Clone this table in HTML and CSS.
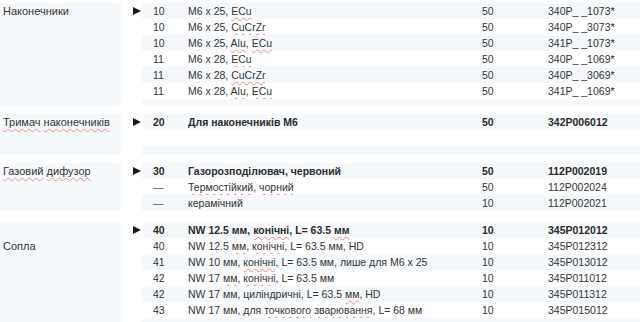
FILE: index.html
```html
<!DOCTYPE html>
<html lang="uk">
<head>
<meta charset="utf-8">
<title>Каталог</title>
<link rel="stylesheet" href="styles.css">
</head>
<body>
<div class="catalog">

  <section class="group g1">
    <div class="label">Наконечники</div>
    <div class="rows">
      <div class="row"><span class="mark"><svg viewBox="0 0 8 8" width="8" height="8"><polygon points="0,0 8,4 0,8"/></svg></span><div class="cells"><span class="num">10</span><span class="desc">M6 x 25, <span class="sp">ECu</span></span><span class="qty">50</span><span class="art">340P_ _1073*</span></div></div>
      <div class="row"><span class="mark"></span><div class="cells"><span class="num">10</span><span class="desc">M6 x 25, <span class="sp">CuCrZr</span></span><span class="qty">50</span><span class="art">340P_ _3073*</span></div></div>
      <div class="row"><span class="mark"></span><div class="cells"><span class="num">10</span><span class="desc">M6 x 25, <span class="sp">Alu</span>, <span class="sp">ECu</span></span><span class="qty">50</span><span class="art">341P_ _1073*</span></div></div>
      <div class="row"><span class="mark"></span><div class="cells"><span class="num">11</span><span class="desc">M6 x 28, <span class="sp">ECu</span></span><span class="qty">50</span><span class="art">340P_ _1069*</span></div></div>
      <div class="row"><span class="mark"></span><div class="cells"><span class="num">11</span><span class="desc">M6 x 28, <span class="sp">CuCrZr</span></span><span class="qty">50</span><span class="art">340P_ _3069*</span></div></div>
      <div class="row"><span class="mark"></span><div class="cells"><span class="num">11</span><span class="desc">M6 x 28, <span class="sp">Alu</span>, <span class="sp">ECu</span></span><span class="qty">50</span><span class="art">341P_ _1069*</span></div></div>
      <div class="row pad pad7"><span class="mark"></span><div class="cells"></div></div>
    </div>
  </section>

  <section class="group g2">
    <div class="label"><span class="sp">Тримач</span> <span class="sp">наконечників</span></div>
    <div class="rows">
      <div class="row main"><span class="mark"><svg viewBox="0 0 8 8" width="8" height="8"><polygon points="0,0 8,4 0,8"/></svg></span><div class="cells"><span class="num">20</span><span class="desc">Для наконечників М6</span><span class="qty">50</span><span class="art">342P006012</span></div></div>
      <div class="row"><span class="mark"></span><div class="cells"></div></div>
      <div class="row pad pad9"><span class="mark"></span><div class="cells"></div></div>
    </div>
  </section>

  <section class="group g3">
    <div class="label"><span class="sp">Газовий</span> <span class="sp">дифузор</span></div>
    <div class="rows">
      <div class="row main"><span class="mark"><svg viewBox="0 0 8 8" width="8" height="8"><polygon points="0,0 8,4 0,8"/></svg></span><div class="cells"><span class="num">30</span><span class="desc">Газорозподілювач, червоний</span><span class="qty">50</span><span class="art">112P002019</span></div></div>
      <div class="row"><span class="mark"></span><div class="cells"><span class="num dash">—</span><span class="desc"><span class="sp">Термостійкий</span>, <span class="sp">чорний</span></span><span class="qty">50</span><span class="art">112P002024</span></div></div>
      <div class="row"><span class="mark"></span><div class="cells"><span class="num dash">—</span><span class="desc">керамічний</span><span class="qty">10</span><span class="art">112P002021</span></div></div>
    </div>
  </section>

  <section class="group g4">
    <div class="label label-low">Сопла</div>
    <div class="rows">
      <div class="row main"><span class="mark"><svg viewBox="0 0 8 8" width="8" height="8"><polygon points="0,0 8,4 0,8"/></svg></span><div class="cells"><span class="num">40</span><span class="desc">NW 12.5 мм, <span class="sp">конічні</span>, L= 63.5 <span class="sp">мм</span></span><span class="qty">10</span><span class="art">345P012012</span></div></div>
      <div class="row"><span class="mark"></span><div class="cells"><span class="num">40</span><span class="desc">NW 12.5 <span class="sp">мм</span>, <span class="sp">конічні</span>, L= 63.5 мм, HD</span><span class="qty">10</span><span class="art">345P012312</span></div></div>
      <div class="row"><span class="mark"></span><div class="cells"><span class="num">41</span><span class="desc">NW 10 мм, <span class="sp">конічні</span>, L= 63.5 мм, лише для M6 x 25</span><span class="qty">10</span><span class="art">345P013012</span></div></div>
      <div class="row"><span class="mark"></span><div class="cells"><span class="num">42</span><span class="desc">NW 17 <span class="sp">мм</span>, <span class="sp">конічні</span>, L= 63.5 мм</span><span class="qty">10</span><span class="art">345P011012</span></div></div>
      <div class="row"><span class="mark"></span><div class="cells"><span class="num">42</span><span class="desc">NW 17 мм, циліндричні, L= 63.5 <span class="sp">мм</span>, HD</span><span class="qty">10</span><span class="art">345P011312</span></div></div>
      <div class="row"><span class="mark"></span><div class="cells"><span class="num">43</span><span class="desc">NW 17 мм, для <span class="sp">точкового</span> <span class="sp">зварювання</span>, L= 68 мм</span><span class="qty">10</span><span class="art">345P015012</span></div></div>
      <div class="row pad pad8"><span class="mark"></span><div class="cells"></div></div>
    </div>
  </section>

</div>
</body>
</html>
```

FILE: styles.css
```css
html, body {
  margin: 0;
  padding: 0;
  background: #ffffff;
}

body {
  font-family: "Liberation Sans", Arial, sans-serif;
  font-size: 10.5px;
  color: #333333;
  overflow: hidden;
}

.catalog {
  display: flex;
  flex-direction: column;
  padding-top: 3px;
}

.group {
  display: flex;
  align-items: stretch;
}

.g1, .g2 {
  margin-bottom: 8px;
}

.g3 {
  margin-bottom: 11px;
}

.label {
  width: 121px;
  flex: none;
  box-sizing: border-box;
  padding-left: 3px;
  line-height: 16px;
  font-size: 11px;
  background: #f5f9fc;
  white-space: nowrap;
}

.label-low {
  padding-top: 16px;
}

.rows {
  flex: 1;
  display: flex;
  flex-direction: column;
}

.row {
  display: flex;
  height: 16px;
  line-height: 16px;
}

.row.pad7 { height: 7px; }
.row.pad8 { height: 8px; }
.row.pad9 { height: 9px; }

.mark {
  width: 21px;
  flex: none;
  display: flex;
  align-items: center;
  justify-content: flex-end;
  padding-right: 1px;
  box-sizing: border-box;
}

.mark svg {
  display: block;
  fill: #1a1a1a;
}

.cells {
  flex: 1;
  display: flex;
  white-space: nowrap;
}

.row:nth-child(odd) .cells {
  background: #f5f9fc;
}

.num {
  width: 35px;
  flex: none;
  padding-left: 11px;
}

.dash {
  color: #555555;
}

.desc {
  width: 294px;
  flex: none;
}

.qty {
  width: 66px;
  flex: none;
}

.art {
  flex: 1;
}

.main .cells {
  font-weight: bold;
  color: #2a2a2a;
}

.sp {
  text-decoration: underline wavy #ec8a8a;
  text-decoration-thickness: 1px;
  text-underline-offset: 2px;
  text-decoration-skip-ink: none;
}
```
